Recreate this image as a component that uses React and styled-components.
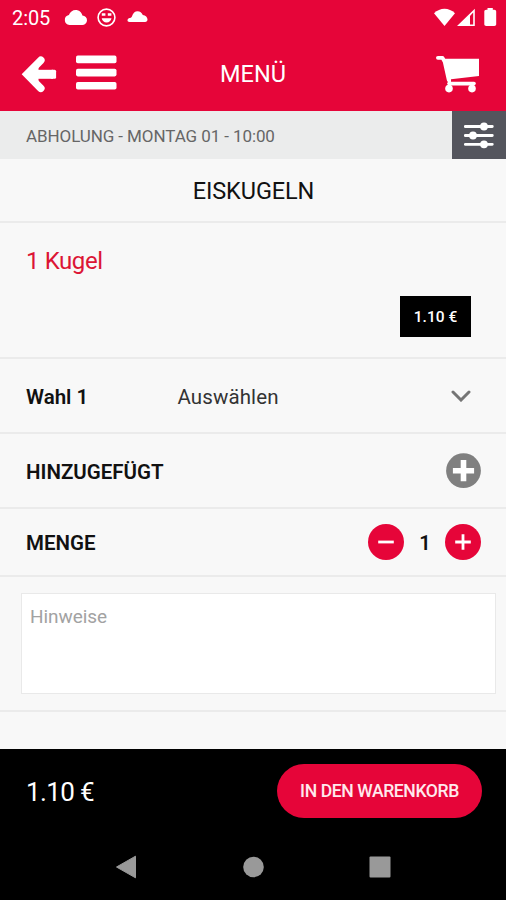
import React from 'react';
import styled, { createGlobalStyle } from 'styled-components';

const RED = '#e60539';

const GlobalStyle = createGlobalStyle`
  * { box-sizing: border-box; }
  body { margin: 0; background: #f8f8f8; font-family: Roboto, "Noto Sans", sans-serif; }
  button { border: 0; padding: 0; background: none; font: inherit; color: inherit; }
  svg { display: block; flex: none; }
`;

const Screen = styled.div`
  width: 506px;
  height: 900px;
  display: flex;
  flex-direction: column;
  overflow: hidden;
  background: #f8f8f8;
`;

const Label = styled.span`
  font-size: ${(p) => p.$size}px;
  font-weight: ${(p) => p.$weight || 400};
  letter-spacing: ${(p) => p.$track || 0}px;
  color: ${(p) => p.$color || '#111'};
  line-height: 1.2;
  white-space: nowrap;
`;

const StatusBar = styled.div`
  height: 36px;
  flex: none;
  display: flex;
  align-items: flex-start;
  justify-content: space-between;
  padding: 0 9px 0 12px;
  background: ${RED};
`;

const StatusLeft = styled.div`
  display: flex;
  align-items: center;
  height: 36px;
`;

const Clock = styled(Label)`
  width: 50px;
`;

const AppBar = styled.header`
  height: 75px;
  flex: none;
  display: grid;
  grid-template-columns: 116px 1fr 116px;
  align-items: center;
  background: ${RED};
`;

const BarLeft = styled.div`
  display: flex;
  padding-left: 21px;
  gap: 19px;
`;

const BarTitle = styled.div`
  padding-top: 1px;
  text-align: center;
`;

const BarRight = styled.div`
  display: flex;
  justify-content: flex-end;
  padding-right: 26px;
`;

const PickupBar = styled.div`
  height: 48px;
  flex: none;
  display: flex;
  align-items: center;
  justify-content: space-between;
  padding-left: 26px;
  background: #ebecec;
`;

const PickupText = styled(Label)`
  padding-top: 2px;
`;

const FilterButton = styled.button`
  width: 54px;
  height: 48px;
  display: flex;
  align-items: center;
  justify-content: center;
  background: #54555d;
`;

const Section = styled.div`
  height: ${(p) => p.$h}px;
  flex: none;
  display: flex;
  align-items: center;
  padding: 0 24px 0 26px;
  border-bottom: 2px solid #ebebeb;
`;

const TitleSection = styled(Section)`
  justify-content: center;
  padding: 2px 0 0 1px;
`;

const ProductSection = styled(Section)`
  flex-direction: column;
  align-items: stretch;
  padding: 24px 35px 0 26px;
`;

const PriceTag = styled.div`
  align-self: flex-end;
  width: 71px;
  height: 41px;
  margin-top: 20px;
  display: flex;
  align-items: center;
  justify-content: center;
  padding-top: 2px;
  background: #000;
`;

const ChoiceSection = styled(Section)`
  display: grid;
  grid-template-columns: 151.5px 1fr auto;
  padding-right: 35px;
`;

const SpreadSection = styled(Section)`
  justify-content: space-between;
`;

const RowText = styled(Label)`
  padding-top: ${(p) => p.$drop ?? 4}px;
`;

const Stepper = styled.div`
  display: grid;
  grid-template-columns: 36px 41px 36px;
  align-items: center;
  justify-items: center;
  padding-right: 1px;
`;

const Quantity = styled(Label)`
  padding: 2px 0 0 1px;
`;

const RoundButton = styled.button`
  width: 36px;
  height: 36px;
  border-radius: 50%;
  display: flex;
  align-items: center;
  justify-content: center;
  background: ${RED};
`;

const NotesSection = styled(Section)`
  align-items: flex-start;
  padding: 16px 10px 0 21px;
`;

const Notes = styled.textarea`
  width: 475px;
  height: 101px;
  padding: 12px 8px;
  border: 1px solid #e9e9e9;
  border-radius: 0;
  outline: 0;
  resize: none;
  background: #fff;
  font: 400 19px/22px Roboto, sans-serif;
  letter-spacing: -0.05px;
  &::placeholder { color: #a2a2a2; opacity: 1; }
`;

const Footer = styled.footer`
  height: 85px;
  flex: none;
  margin-top: auto;
  display: flex;
  align-items: center;
  justify-content: space-between;
  padding: 0 24px 2px 26px;
  background: #000;
`;

const TotalPrice = styled(Label)`
  padding-top: 5px;
`;

const CartButton = styled.button`
  width: 205px;
  height: 54px;
  padding-top: 3px;
  border-radius: 27px;
  background: ${RED};
`;

const NavBar = styled.nav`
  height: 66px;
  flex: none;
  display: grid;
  grid-template-columns: repeat(3, 127px);
  justify-content: center;
  justify-items: center;
  align-items: center;
  background: #000;
`;

const StatusIcons = () => (
  <svg width="86" height="36" viewBox="62 0 86 36" fill="#fff">
    <path d="M69.500 25a5 5 0 0 1-.6-9.900C70 12 72.500 10 75.700 10c3.300 0 5.900 2.200 6.700 5.400A4.800 4.800 0 0 1 82 25z" />
    <circle cx="106.500" cy="17.500" r="8.400" fill="none" stroke="#fff" strokeWidth="1.600" />
    <path d="M101.800 13.200h3.600v2.600h-3.600zM107.800 13.200h3.600v2.600h-3.600zM101.700 18.300h9.800c-.5 2.500-2.300 4.300-4.900 4.300s-4.400-1.800-4.900-4.300z" />
    <path d="M129.500 22c-2.600 0-2.800-3.400.2-4 .9-.2 1.700-.6 2.200-1.600C133 13 135 11.200 137.500 11.200c2.600 0 4.300 1.300 5.300 3.800 2.800.5 4.700 2.300 4.700 4.500 0 1.600-.9 2.500-2.400 2.500z" />
  </svg>
);

const SignalIcons = () => (
  <svg width="63" height="36" viewBox="434 0 63 36" fill="#fff">
    <path d="M434 13.200c6-6 15-6 21 0L444.500 26z" />
    <path fillRule="evenodd" d="M457 26L474.800 8.800V26zM470 16v8.500h3.200v-12z" />
    <path d="M487.500 9.800V8h5.300v1.800h1.500c1.100 0 1.900.7 1.900 1.700v12.800c0 1-.8 1.700-1.900 1.700h-8.100c-1.100 0-1.900-.7-1.900-1.700V11.500c0-1 .8-1.700 1.900-1.700z" />
  </svg>
);

const BackIcon = () => (
  <svg width="36" height="38" viewBox="0 0 36 38" fill="none" stroke="#fff" strokeLinejoin="round" strokeLinecap="round">
    <path d="M19.800 5.300L6 19.300l13.800 14" strokeWidth="7.600" strokeLinejoin="miter" />
    <path d="M8 19.300H32" strokeWidth="9" strokeLinecap="butt" />
    <path d="M31 16.300h2.600v6H31z" fill="#fff" strokeWidth="3" />
    <path d="M6 19.300L16 10v18.600z" fill="#fff" strokeWidth="3" />
  </svg>
);

const BurgerIcon = () => (
  <svg width="41" height="38" viewBox="0 0 41 38" fill="#fff">
    <rect y="0.600" width="40.500" height="7.600" rx="1.800" />
    <rect y="13.800" width="40.500" height="7.600" rx="1.800" />
    <rect y="27" width="40.500" height="7.600" rx="1.800" />
  </svg>
);

const CartIcon = () => (
  <svg width="44" height="38" viewBox="436 54.700 44 38" fill="#fff">
    <path d="M437.900 57.500h4.600l2.200 4 4 18" fill="none" stroke="#fff" strokeWidth="3.800" strokeLinecap="round" strokeLinejoin="round" />
    <path d="M443.500 58.500H479V75.600L451 78.900V83H448.200z" />
    <path d="M449 83.300h25" stroke="#fff" strokeWidth="3.600" strokeLinecap="round" />
    <circle cx="449" cy="88.300" r="3.800" />
    <circle cx="472" cy="88.300" r="3.800" />
  </svg>
);

const SlidersIcon = () => (
  <svg width="30" height="28" viewBox="0 0 30 28" fill="#fff">
    <path d="M1.300 5.500h27M1.300 14.500h27M1.300 23.300h27" stroke="#fff" strokeWidth="2.800" strokeLinecap="round" />
    <circle cx="20" cy="5.500" r="3.900" />
    <circle cx="9" cy="14.500" r="3.900" />
    <circle cx="20" cy="23.300" r="3.900" />
  </svg>
);

const ChevronIcon = () => (
  <svg width="20" height="12" viewBox="0 0 20 12">
    <path d="M2 2l8 8 8-8" fill="none" stroke="#757575" strokeWidth="3" strokeLinecap="round" />
  </svg>
);

const AddIcon = () => (
  <svg width="36" height="36" viewBox="0 0 36 36">
    <circle cx="17.500" cy="17.700" r="17.400" fill="#808080" />
    <path d="M17.500 9.900v15.600M9.700 17.700h15.600" stroke="#fff" strokeWidth="5.600" strokeLinecap="square" />
  </svg>
);

const SignIcon = ({ plus }) => (
  <svg width="18" height="18" viewBox="0 0 18 18">
    <path d={plus ? 'M1.200 9h15.600M9 1.200v15.600' : 'M1.200 9h15.600'} stroke="#fff" strokeWidth="2.800" />
  </svg>
);

const BackNav = () => (
  <svg width="22" height="24" viewBox="0 0 22 24">
    <path d="M1.500 12L20.500 1.200v21.600z" fill="#999" stroke="#999" strokeLinejoin="round" />
  </svg>
);

const HomeNav = () => (
  <svg width="22" height="22" viewBox="0 0 22 22">
    <circle cx="11.500" cy="11" r="10.300" fill="#999" />
  </svg>
);

const RecentNav = () => (
  <svg width="22" height="22" viewBox="0 0 22 22">
    <rect x="0.500" y="0.500" width="21" height="21" rx="1" fill="#999" />
  </svg>
);

export default function App() {
  return (
    <Screen>
      <GlobalStyle />
      <StatusBar>
        <StatusLeft>
          <Clock $size={20} $color="#fff" $track={-0.1}>2:05</Clock>
          <StatusIcons />
        </StatusLeft>
        <SignalIcons />
      </StatusBar>
      <AppBar>
        <BarLeft>
          <BackIcon />
          <BurgerIcon />
        </BarLeft>
        <BarTitle>
          <Label $size={23.5} $color="#fff">MENÜ</Label>
        </BarTitle>
        <BarRight>
          <CartIcon />
        </BarRight>
      </AppBar>
      <PickupBar>
        <PickupText $size={17} $color="#666" $track={-0.09}>ABHOLUNG - MONTAG 01 - 10:00</PickupText>
        <FilterButton aria-label="Filter">
          <SlidersIcon />
        </FilterButton>
      </PickupBar>
      <TitleSection $h={64}>
        <Label $size={23.5} $track={-0.1}>EISKUGELN</Label>
      </TitleSection>
      <ProductSection $h={136}>
        <Label $size={24} $color="#dc1535" $track={-0.4}>1 Kugel</Label>
        <PriceTag>
          <Label $size={15.5} $weight={500} $color="#fff">1.10 €</Label>
        </PriceTag>
      </ProductSection>
      <ChoiceSection $h={75}>
        <RowText $size={20.5} $weight={600}>Wahl 1</RowText>
        <RowText $size={20.5} $color="#333" $track={0.1}>Auswählen</RowText>
        <ChevronIcon />
      </ChoiceSection>
      <SpreadSection $h={75}>
        <RowText $size={20.5} $weight={600}>HINZUGEFÜGT</RowText>
        <AddIcon />
      </SpreadSection>
      <SpreadSection $h={68}>
        <RowText $size={20.5} $weight={600} $drop={2}>MENGE</RowText>
        <Stepper>
          <RoundButton aria-label="Weniger"><SignIcon /></RoundButton>
          <Quantity $size={20} $weight={600}>1</Quantity>
          <RoundButton aria-label="Mehr"><SignIcon plus /></RoundButton>
        </Stepper>
      </SpreadSection>
      <NotesSection $h={135}>
        <Notes placeholder="Hinweise" />
      </NotesSection>
      <Footer>
        <TotalPrice $size={26} $color="#fff" $track={-0.65}>1.10 €</TotalPrice>
        <CartButton>
          <Label $size={17.6} $weight={500} $color="#ffe9ed" $track={-0.42}>IN DEN WARENKORB</Label>
        </CartButton>
      </Footer>
      <NavBar>
        <BackNav />
        <HomeNav />
        <RecentNav />
      </NavBar>
    </Screen>
  );
}
